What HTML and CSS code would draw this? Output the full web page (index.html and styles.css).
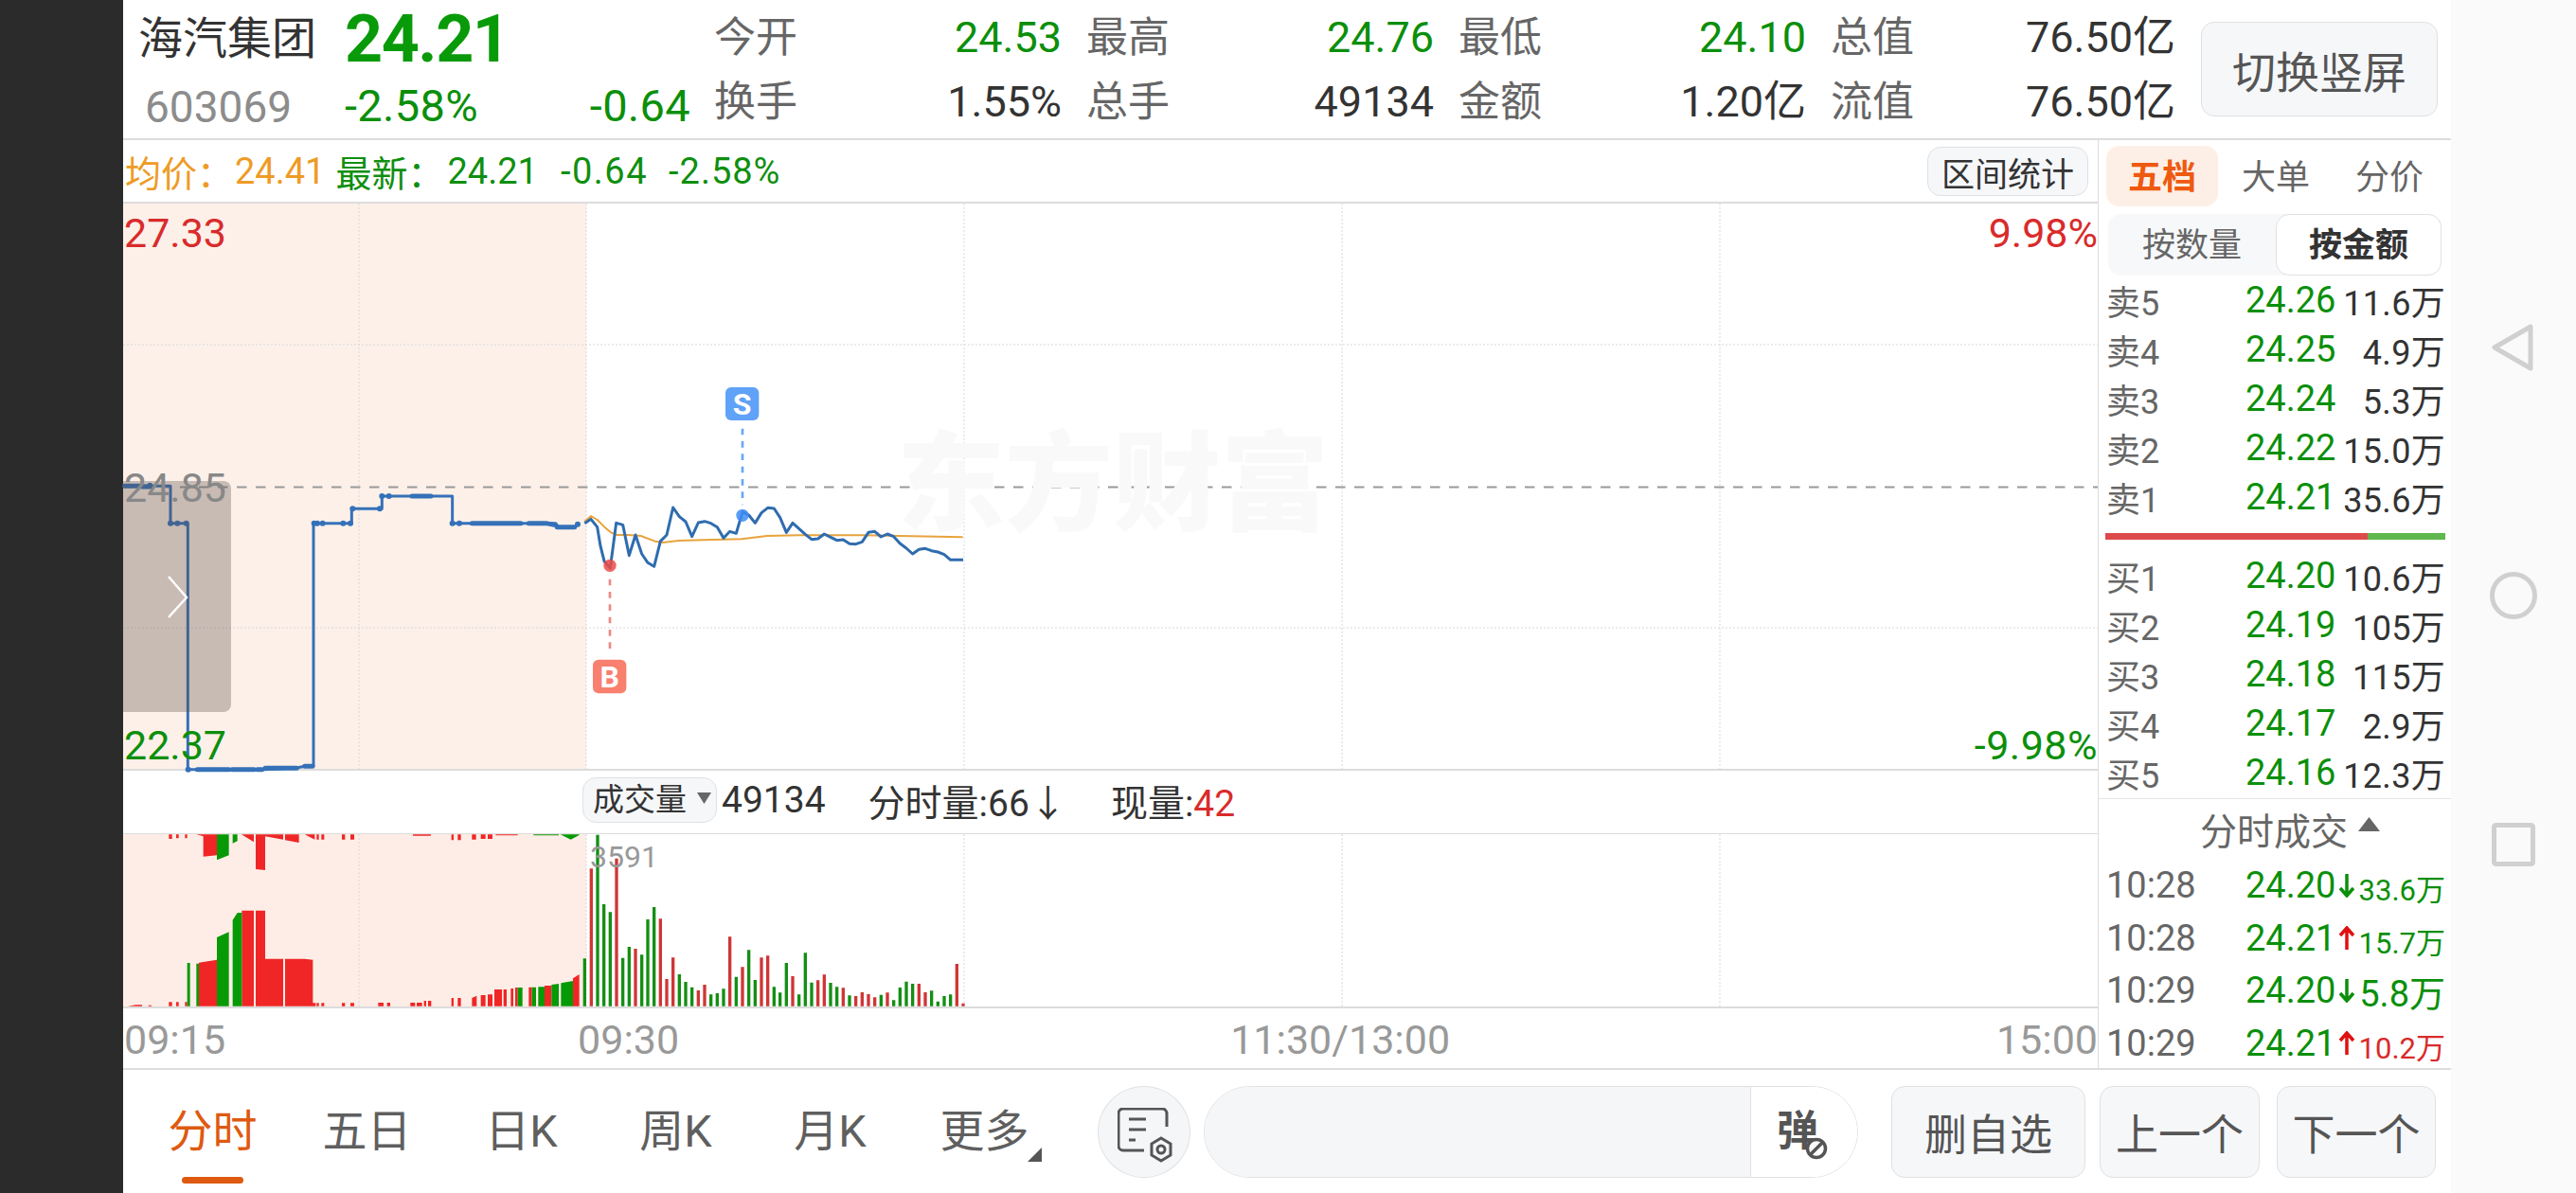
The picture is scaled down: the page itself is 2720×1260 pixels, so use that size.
FILE: index.html
```html
<!DOCTYPE html>
<html lang="zh-CN">
<head>
<meta charset="utf-8">
<title>海汽集团 603069</title>
<link rel="stylesheet" href="styles.css">
</head>
<body>
<div class="screen">
  <aside class="edge"></aside>
  <main class="app">
    <header class="quote">
      <div class="ident">
        <div class="name">海汽集团</div>
        <div class="last">24.21</div>
        <div class="code">603069</div>
        <div class="change"><span>-2.58%</span><span>-0.64</span></div>
      </div>
      <div class="stats">
        <div class="stat"><span class="k">今开</span><span class="dn">24.53</span></div>
        <div class="stat"><span class="k">最高</span><span class="dn">24.76</span></div>
        <div class="stat"><span class="k">最低</span><span class="dn">24.10</span></div>
        <div class="stat"><span class="k">总值</span><span>76.50亿</span></div>
        <div class="stat"><span class="k">换手</span><span>1.55%</span></div>
        <div class="stat"><span class="k">总手</span><span>49134</span></div>
        <div class="stat"><span class="k">金额</span><span>1.20亿</span></div>
        <div class="stat"><span class="k">流值</span><span>76.50亿</span></div>
      </div>
      <button class="btn switch">切换竖屏</button>
    </header>

    <div class="workspace">
      <section class="charts">
        <div class="legend">
          <span class="avg">均价：</span><span class="avg gap">24.41</span>
          <span class="fresh">最新：</span><span class="fresh v1">24.21</span><span class="fresh v2">-0.64</span><span class="fresh v3">-2.58%</span>
          <button class="btn stat-btn">区间统计</button>
        </div>

        <div class="plot">
          <svg class="plot-svg" viewBox="130 215 2085 597" aria-hidden="true">
            <rect class="pre" x="130" y="215" width="489" height="597"/>
            <path class="grid" d="M130 364H2215M130 663H2215M379 215V812M619 215V812M1018 215V812M1417 215V812M1816 215V812"/>
            <path class="base" d="M130 514.5H2215"/>
            <g transform="translate(130 490) scale(.33333)">
              <path class="line" d="M5 70H150V188H205V968H450L550 963L575 958L603 957V188H724V142H820V102H1043V188H1370L1380 200H1430L1440 192"/>
              <path class="line-thick" d="M5 70H50M60 72H90M235 968H335M345 968H415M425 968H440M450 964H550M575 958H600M915 102H975M1105 188H1260M1285 188H1340L1370 194M1375 200H1430"/>
              <path class="line-dots" d="M85 68h0M150 188h0M172 188h0M200 188h0M206 968h0M605 188h0M615 188h0M632 188h0M697 188h0M720 188h0M727 142h0M813 142h0M820 102h0M842 102h0M1043 188h0M1065 188h0M1440 191h0"/>
            </g>
            <g transform="translate(610 400) scale(.33333)">
              <path class="avg-line" d="M22 452L42 435L62 447L85 470L105 487L125 495L160 495L200 498L245 515L270 519L320 513L400 511L520 508L600 498L700 496L900 496L1220 502"/>
              <path class="tick" d="M22 458L42 445L62 470L72 530L84 578L103 600L122 457L143 463L163 560L183 495L203 555L222 583L242 595L262 515L282 495L302 408L322 437L342 453L362 500L382 456L402 452L422 458L442 470L462 505L482 484L502 490L522 422L542 432L562 457L582 425L602 409L622 411L641 440L661 487L681 457L701 475L721 493L741 509L761 507L781 492L801 502L821 512L841 510L861 523L881 524L901 517L921 487L941 484L961 501L981 492L1001 500L1021 522L1041 537L1061 555L1081 541L1101 538L1121 545L1141 549L1161 557L1181 574L1221 574"/>
              <path class="sell-dash" d="M522 158V400"/>
              <path class="buy-dash" d="M102 635V870"/>
              <circle class="sell-dot" cx="522" cy="433" r="20"/>
              <circle class="buy-dot" cx="102" cy="592" r="20"/>
              <rect class="sell-tag" x="468" y="27" width="106" height="105" rx="18"/>
              <rect class="buy-tag" x="48" y="890" width="106" height="107" rx="18"/>
              <text class="tag-text" x="521" y="113">S</text>
              <text class="tag-text" x="101" y="977">B</text>
            </g>
            <path class="fold" d="M130 508H236a8 8 0 0 1 8 8V744a8 8 0 0 1-8 8H130Z"/>
            <path class="fold-arrow" d="M178 609L197 631L178 652"/>
          </svg>
          <div class="watermark">东方财富</div>
          <span class="tag tl up">27.33</span>
          <span class="tag ml">24.85</span>
          <span class="tag bl dn">22.37</span>
          <span class="tag tr up">9.98%</span>
          <span class="tag br dn">-9.98%</span>
        </div>

        <div class="vol-head">
          <button class="btn vol-btn">成交量<i class="caret"></i></button>
          <span class="vol-total">49134</span>
          <span class="vol-min">分时量:66↓</span>
          <span class="vol-now">现量:<b>42</b></span>
        </div>

        <div class="volume">
          <svg class="plot-svg" viewBox="130 881 2085 182" aria-hidden="true">
            <rect class="pre-vol" x="130" y="881" width="489" height="182"/>
            <path class="grid" d="M379 881V1063M619 881V1063M1018 881V1063M1417 881V1063M1816 881V1063"/>
            <g transform="translate(130 870) scale(.33333)">
              <path class="pre-red" d="M15 578L40 574H60V578ZM80 578V575H90V578ZM145 578V565H155V578ZM168 578V565H176V578ZM196 578V565H203V578ZM240 578V440L297 431V578ZM376 578V275H414V578ZM420 578V275H450V578ZM450 578V428H507V578ZM513 578V428H575L601 431V578ZM601 578V568H610V578ZM613 578V568H620V578ZM628 578V568H637V578ZM693 578V568H703V578ZM720 578V568H732V578ZM808 578V567H825V578ZM836 578V567H846V578ZM910 578V567H925V578ZM930 578V567H947V578ZM953 578V561H960V578ZM966 578V561H976V578ZM1040 578V552H1047V578ZM1060 578V552H1070V578ZM1105 578V552L1120 545V578ZM1133 578V543H1148V578ZM1155 578V541H1170V578ZM1176 578V525H1200V578ZM1205 578V525H1215V578ZM1228 578V522H1236V578ZM1242 578V519H1250V578ZM1285 578V518H1295V578ZM1335 578V513H1357V578ZM1425 578V490L1445 477V578Z"/>
              <path class="pre-green" d="M203 578V441H212V578ZM232 578V443H240V578ZM297 578V360L335 343V578ZM347 578V305L362 282H376V578ZM1250 578V519H1265V578ZM1295 578V518H1308V578ZM1315 578V517H1335V578ZM1357 578V510L1380 507V578ZM1387 578V505L1425 498V578Z"/>
              <path class="pre-red" d="M145 34V48H155V34ZM168 34V46H176V34ZM196 34V46H203V34ZM232 34H254V40ZM254 34V104L297 100V34ZM375 34L414 58V34ZM420 34V144L450 147V34ZM450 34V40L507 50V34ZM513 34V52L557 60V34ZM575 34L607 50V34ZM613 34V50H620V34ZM628 34V50H637V34ZM693 34V50H703V34ZM720 34V50H732V34ZM918 34V38H975V34ZM1040 34V52H1047V34ZM1060 34V52H1070V34ZM1105 34V50H1118V34ZM1133 34V48H1148V34ZM1155 34V48H1170V34ZM1180 34V37H1250V34Z"/>
              <path class="pre-green" d="M297 34V115L335 100V34ZM347 34V62L362 55V34ZM1300 34V37H1380V34ZM1385 34L1418 50L1445 36V34Z"/>
            </g>
            <g transform="translate(610 820) scale(.33333)">
              <path class="post-red" d="M43 728V292M123 728V260M183 728V546M262 728V451M282 728V642M302 728V574M382 728V678M402 728V660M482 728V508M522 728V604M582 728V574M602 728V568M681 728V633M761 728V646M781 728V628M841 728V670M881 728V696M901 728V684M921 728V690M941 728V700M981 728V685M1081 728V657M1101 728V684M1201 728V594M1221 728V719"/>
              <path class="post-green" d="M22 728V577M63 728V185M83 728V405M103 728V430M143 728V575M163 728V540M203 728V565M222 728V453M242 728V414M322 728V627M342 728V651M362 728V668M422 728V691M442 728V687M462 728V673M502 728V635M542 728V550M562 728V645M622 728V667M641 728V685M661 728V591M701 728V691M721 728V559M741 728V653M801 728V654M821 728V667M861 728V694M961 728V692M1001 728V709M1021 728V669M1041 728V650M1061 728V657M1121 728V679M1141 728V713M1161 728V696M1181 728V691"/>
            </g>
          </svg>
          <span class="peak">3591</span>
        </div>

        <div class="axis">
          <span class="a1">09:15</span>
          <span class="a2">09:30</span>
          <span class="a3">11:30/13:00</span>
          <span class="a4">15:00</span>
        </div>
      </section>

      <aside class="side">
        <nav class="side-tabs">
          <span class="side-tab on">五档</span>
          <span class="side-tab">大单</span>
          <span class="side-tab">分价</span>
        </nav>
        <div class="toggle">
          <span class="opt">按数量</span>
          <span class="opt on">按金额</span>
        </div>
        <div class="book">
          <div class="lvl"><span class="lab">卖5</span><span class="px">24.26</span><span class="amt">11.6万</span></div>
          <div class="lvl"><span class="lab">卖4</span><span class="px">24.25</span><span class="amt">4.9万</span></div>
          <div class="lvl"><span class="lab">卖3</span><span class="px">24.24</span><span class="amt">5.3万</span></div>
          <div class="lvl"><span class="lab">卖2</span><span class="px">24.22</span><span class="amt">15.0万</span></div>
          <div class="lvl"><span class="lab">卖1</span><span class="px">24.21</span><span class="amt">35.6万</span></div>
        </div>
        <div class="ratio"><i class="ratio-buy"></i><i class="ratio-sell"></i></div>
        <div class="book buy">
          <div class="lvl"><span class="lab">买1</span><span class="px">24.20</span><span class="amt">10.6万</span></div>
          <div class="lvl"><span class="lab">买2</span><span class="px">24.19</span><span class="amt">105万</span></div>
          <div class="lvl"><span class="lab">买3</span><span class="px">24.18</span><span class="amt">115万</span></div>
          <div class="lvl"><span class="lab">买4</span><span class="px">24.17</span><span class="amt">2.9万</span></div>
          <div class="lvl"><span class="lab">买5</span><span class="px">24.16</span><span class="amt">12.3万</span></div>
        </div>
        <div class="trades-head">分时成交<i class="tri-up"></i></div>
        <div class="trades">
          <div class="trade"><span class="tm">10:28</span><span class="px">24.20</span><svg class="arr dn-arr" viewBox="0 0 18 26"><path d="M9 1V24M2 16L9 24L16 16"/></svg><span class="amt small dn">33.6万</span></div>
          <div class="trade"><span class="tm">10:28</span><span class="px">24.21</span><svg class="arr up-arr" viewBox="0 0 18 26"><path d="M9 25V2M2 10L9 2L16 10"/></svg><span class="amt small dn">15.7万</span></div>
          <div class="trade"><span class="tm">10:29</span><span class="px">24.20</span><svg class="arr dn-arr" viewBox="0 0 18 26"><path d="M9 1V24M2 16L9 24L16 16"/></svg><span class="amt big dn">5.8万</span></div>
          <div class="trade"><span class="tm">10:29</span><span class="px">24.21</span><svg class="arr up-arr" viewBox="0 0 18 26"><path d="M9 25V2M2 10L9 2L16 10"/></svg><span class="amt small up">10.2万</span></div>
        </div>
      </aside>
    </div>

    <footer class="bar">
      <nav class="periods">
        <span class="period on">分时</span>
        <span class="period">五日</span>
        <span class="period">日K</span>
        <span class="period">周K</span>
        <span class="period">月K</span>
        <span class="period more">更多</span>
      </nav>
      <button class="round" aria-label="设置">
        <svg class="doc" viewBox="0 0 60 58"><path d="M52 20V6a5 5 0 0 0-5-5H6a5 5 0 0 0-5 5v34a5 5 0 0 0 5 5h22M12 12h18M12 23h18M12 34h7M46 32l10 6v12l-10 6l-10-6V38z"/><circle cx="46" cy="44" r="4"/></svg>
      </button>
      <div class="comment">
        <div class="comment-input"></div>
        <div class="danmu"><span class="danmu-glyph">弹<svg class="ban" viewBox="0 0 24 24"><circle cx="12" cy="12" r="9.5"/><path d="M6 18L18 6"/></svg></span></div>
      </div>
      <button class="btn act del">删自选</button>
      <button class="btn act prev">上一个</button>
      <button class="btn act next">下一个</button>
    </footer>
  </main>
  <aside class="sysnav">
    <svg class="sys s-back" viewBox="0 0 44 50"><path d="M41 3V47L3 25Z"/></svg>
    <svg class="sys s-home" viewBox="0 0 50 50"><circle cx="25" cy="25" r="22.5"/></svg>
    <svg class="sys s-task" viewBox="0 0 46 46"><rect x="2.500" y="2.500" width="41" height="41" rx="2"/></svg>
  </aside>
</div>
</body>
</html>
```
FILE: styles.css
```css
* { box-sizing: border-box; }
html, body { margin: 0; padding: 0; }
body {
  width: 2720px;
  height: 1260px;
  overflow: hidden;
  background: #fff;
  color: #333;
  font-family: Roboto, "Noto Sans CJK SC", sans-serif;
}
button { font-family: inherit; padding: 0; }
.screen { display: flex; height: 1260px; }
.edge { width: 130px; background: #2b2b2b; flex: none; }
.app { width: 2458px; flex: none; display: flex; flex-direction: column; background: #fff; }
.sysnav {
  width: 132px; flex: none; background: #fafafa;
  display: flex; flex-direction: column; align-items: center;
  padding: 342px 0 0 0;
}
.sys { fill: none; stroke: #d0d0d0; stroke-width: 5; stroke-linejoin: round; display: block; }
.s-back { width: 44px; height: 50px; margin-left: -2px; }
.s-home { width: 50px; height: 50px; margin-top: 212px; }
.s-task { width: 46px; height: 46px; margin-top: 215px; }

.dn { color: #0b8f0b; }
.up { color: #d92b2b; }

.btn {
  background: #f6f7f9;
  border: 1.5px solid #dfe1e4;
  border-radius: 14px;
  color: #555;
}

/* quote header */
.quote {
  height: 148px;
  flex: none;
  display: flex;
  align-items: flex-start;
  border-bottom: 2px solid #dcdcdc;
  padding: 6px 14px 0 16px;
}
.ident {
  width: 608px;
  flex: none;
  display: grid;
  grid-template-columns: 218px 365px;
  grid-template-rows: 68px 68px;
  align-items: center;
}
.name { font-size: 47px; line-height: 70px; color: #333; padding-top: 2px; }
.last { font-size: 70px; line-height: 70px; font-weight: 700; color: #099a09; letter-spacing: -1.500px; padding-top: 2px; }
.code { font-size: 46px; line-height: 68px; color: #8c8c8c; padding-left: 7px; padding-top: 10px; }
.change { display: flex; justify-content: space-between; font-size: 47px; line-height: 68px; color: #0b8f0b; padding-top: 8px; letter-spacing: .3px; }
.stats {
  width: 1543px;
  flex: none;
  display: grid;
  grid-template-columns: 367px 367px 367px 364px;
  grid-auto-rows: 68px;
  column-gap: 26px;
  align-items: center;
  font-size: 45px;
  color: #333;
}
.stat { display: flex; justify-content: space-between; align-items: center; line-height: 68px; }
.k { color: #666; font-size: 44px; }
.stat .dn { color: #0b8f0b; }
.switch { width: 250px; height: 100px; margin: 17px 0 0 27px; font-size: 46px; flex: none; }

.workspace { display: flex; height: 980px; flex: none; }
.charts { width: 2085px; flex: none; display: flex; flex-direction: column; }

/* legend */
.legend {
  height: 67px;
  flex: none;
  display: flex;
  align-items: center;
  border-bottom: 2px solid #dcdcdc;
  font-size: 38px;
  padding-left: 2px;
}
.avg { color: #ee9b26; }
.avg.gap { margin: 0 11px 0 2px; }
.fresh { color: #0f8f0f; }
.v1 { margin-left: 4px; }
.v2 { margin-left: 24px; letter-spacing: 1.500px; }
.v3 { margin-left: 22px; letter-spacing: 1px; }
.stat-btn { margin-left: auto; margin-right: 10px; width: 170px; height: 52px; font-size: 35px; color: #333; }

/* plots */
.plot { position: relative; height: 597px; flex: none; }
.plot-svg { display: block; width: 2085px; height: 100%; overflow: visible; }
.pre { fill: #fdf0e9; }
.pre-vol { fill: #feede6; }
.grid { fill: none; stroke: #d8d8d8; stroke-width: 1; stroke-dasharray: 2 2; }
.base { fill: none; stroke: #999; stroke-width: 2; stroke-dasharray: 10.500 9.500; }
.line { fill: none; stroke: #3571b8; stroke-width: 9; stroke-linejoin: round; }
.line-thick { fill: none; stroke: #3571b8; stroke-width: 15; stroke-linecap: round; }
.line-dots { fill: none; stroke: #3571b8; stroke-width: 18; stroke-linecap: round; }
.avg-line { fill: none; stroke: #e8a33d; stroke-width: 6; stroke-linejoin: round; }
.tick { fill: none; stroke: #2f6cae; stroke-width: 9; stroke-linejoin: round; }
.sell-dash { fill: none; stroke: #6aa6f5; stroke-width: 8; stroke-dasharray: 20 20; }
.buy-dash { fill: none; stroke: #ea8a86; stroke-width: 8; stroke-dasharray: 20 20; }
.sell-dot { fill: #3d8cf5; fill-opacity: .85; }
.buy-dot { fill: #ee4a46; fill-opacity: .85; }
.sell-tag { fill: #5fa2f7; }
.buy-tag { fill: #f97f6f; }
.tag-text { fill: #fff; font-size: 96px; font-weight: 700; text-anchor: middle; font-family: Roboto, sans-serif; }
.fold { fill: #5a4a44; fill-opacity: .32; }
.fold-arrow { fill: none; stroke: #fff; stroke-width: 2.500; }
.watermark {
  position: absolute;
  left: 817px;
  top: 232px;
  font-size: 114px;
  line-height: 130px;
  font-weight: 900;
  color: #f9f9f9;
  white-space: nowrap;
}
.tag { position: absolute; font-size: 43px; line-height: 50px; }
.tl { left: 1px; top: 6px; }
.ml { left: 1px; top: 275px; color: #888; }
.bl { left: 1px; top: 547px; }
.tr { right: 0; top: 6px; }
.br { right: 0; top: 547px; letter-spacing: .5px; }

.vol-head {
  height: 69px;
  flex: none;
  display: flex;
  align-items: center;
  border-top: 2px solid #dcdcdc;
  border-bottom: 1.5px solid #dcdcdc;
  padding: 0 0 4px 485px;
  font-size: 39px;
  color: #333;
  white-space: nowrap;
}
.vol-btn {
  width: 142px; height: 48px; font-size: 33px; color: #333;
  display: flex; align-items: center; padding-left: 10px; flex: none;
  line-height: 44px;
}
.caret {
  width: 15px; height: 12px; margin-left: 11px; background: #666; margin-top: -4px;
  clip-path: polygon(0 0, 100% 0, 50% 100%);
  display: block;
}
.vol-total { margin-left: 5px; }
.vol-min { margin-left: 45px; }
.vol-now { margin-left: 47px; }
.vol-now b { font-weight: 400; color: #d92b2b; }

.volume { position: relative; height: 182px; flex: none; }
.pre-red { fill: #f02626; }
.pre-green { fill: #069a06; }
.post-red { fill: none; stroke: #cf3636; stroke-width: 10; }
.post-green { fill: none; stroke: #148f14; stroke-width: 10; }
.peak { position: absolute; left: 493px; top: 4px; font-size: 32px; line-height: 40px; color: #999; }

.axis {
  flex: 1;
  display: flex;
  align-items: center;
  border-top: 2px solid #dcdcdc;
  font-size: 43px;
  color: #999;
  padding: 2px 0 0 1px;
  white-space: nowrap;
}
.a2 { margin-left: 372px; }
.a3 { margin-left: 582px; }
.a4 { margin-left: auto; }

/* right column */
.side { width: 373px; flex: none; border-left: 1.5px solid #dcdcdc; padding: 6px 0 0 0; overflow: hidden; }
.side-tabs { display: flex; height: 64px; padding-left: 8px; }
.side-tab { width: 118px; text-align: center; font-size: 36px; line-height: 69px; color: #666; }
.side-tab + .side-tab { margin-left: 2px; }
.side-tab.on { background: #feefe6; color: #ee5a10; font-weight: 700; border-radius: 14px; }
.toggle {
  display: flex; height: 65px; margin: 8px 10px 0 10px; width: 352px;
  background: #f7f8fa; border-radius: 14px;
}
.opt { font-size: 35px; line-height: 68px; color: #666; text-align: center; width: 177px; }
.opt.on { width: 175px; background: #fff; color: #333; font-weight: 700; border: 1.5px solid #dfe1e4; border-radius: 14px; line-height: 65px; }
.book { padding: 0 6px 0 8px; }
.lvl { display: flex; height: 52px; align-items: center; font-size: 36px; }
.lab { width: 147px; flex: none; color: #666; }
.px { font-size: 38px; color: #0b8f0b; }
.amt { margin-left: auto; font-size: 36px; color: #333; letter-spacing: .3px; }
.ratio { display: flex; height: 7px; margin: 12px 6px 0 7px; width: 359px; }
.ratio-buy { width: 277px; background: #dd4a4a; display: block; }
.ratio-sell { flex: 1; background: #5fb84f; display: block; }
.book.buy { height: 273px; padding-top: 12px; }
.trades-head {
  border-top: 1.5px solid #e4e4e4;
  height: 62px;
  display: flex; align-items: center; justify-content: center;
  font-size: 39px; color: #666;
  padding-left: 32px;
}
.tri-up {
  width: 23px; height: 15px; margin-left: 11px; background: #666; margin-top: -8px; display: block;
  clip-path: polygon(50% 0, 100% 100%, 0 100%);
}
.trades { padding: 2px 6px 0 8px; }
.trade { display: flex; height: 55.700px; align-items: center; font-size: 38px; }
.tm { width: 147px; flex: none; color: #666; }
.trade .amt { letter-spacing: 0; }
.trade .amt.dn { color: #0b8f0b; }
.trade .amt.up { color: #d92b2b; }
.amt.small { font-size: 31px; padding-top: 5px; }
.amt.big { font-size: 38px; }
.arr { width: 18px; height: 26px; margin-left: 3px; fill: none; stroke-width: 3.500; }
.dn-arr { stroke: #0b8f0b; }
.up-arr { stroke: #e01010; }

/* bottom bar */
.bar {
  flex: 1;
  display: flex;
  align-items: center;
  border-top: 2px solid #dcdcdc;
  padding-left: 13px;
}
.periods { display: grid; grid-template-columns: repeat(6, 163px); align-self: flex-start; }
.period {
  position: relative;
  display: flex; flex-direction: column; align-items: center;
  font-size: 47px; line-height: 60px; color: #5f5f5f;
  padding-top: 35px;
}
.period.on { color: #de5a10; }
.period.on::after {
  content: ""; display: block; width: 65px; height: 7px;
  background: #de5a10; border-radius: 4px; margin-top: 18px;
}
.period.more::after {
  content: ""; position: absolute; left: 127px; top: 82px; width: 15px; height: 15px;
  background: #555; clip-path: polygon(100% 0, 100% 100%, 0 100%);
}
.round {
  width: 98px; height: 97px; margin-left: 38px; flex: none;
  border-radius: 50%; background: #f5f6f8; border: 1.5px solid #dfe1e4;
  display: flex; align-items: center; justify-content: center;
}
.doc { width: 60px; height: 58px; fill: none; stroke: #555; stroke-width: 3; margin: 8px 0 0 4px; }
.comment {
  width: 691px; height: 97px; margin-left: 14px; flex: none;
  display: flex; overflow: hidden;
  border: 1.5px solid #dfe1e4; border-radius: 49px;
}
.comment-input { flex: 1; background: #f5f6f8; }
.danmu { width: 113px; background: #fff; border-left: 1.5px solid #dfe1e4; display: flex; align-items: center; justify-content: center; padding-right: 14px; }
.danmu-glyph { position: relative; font-size: 44px; font-weight: 700; color: #555; line-height: 60px; }
.ban { position: absolute; right: -10px; bottom: 0; width: 24px; height: 24px; fill: #fff; stroke: #555; stroke-width: 3.500; }
.act { height: 97px; font-size: 45px; flex: none; }
.del { width: 205px; margin-left: 35px; }
.prev { width: 169px; margin-left: 15px; }
.next { width: 168px; margin-left: 18px; }
```
